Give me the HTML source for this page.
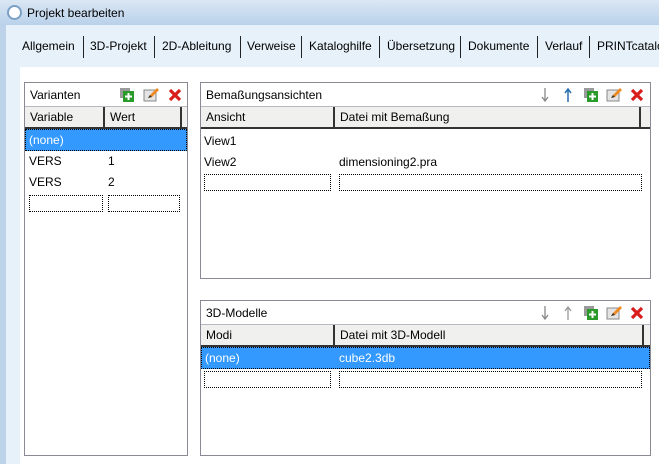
<!DOCTYPE html>
<html><head><style>
*{margin:0;padding:0;box-sizing:border-box}
body{width:659px;height:464px;overflow:hidden;background:#fff;font-family:"Liberation Sans",sans-serif;font-size:12px;color:#000;position:relative}
.abs{position:absolute}
.title{left:0;top:0;width:659px;height:25px;background:linear-gradient(#dbe7f4,#b9d1ea)}
.title span{position:absolute;left:27px;top:6px;font-size:12px}
.ico{left:7px;top:5px;width:15px;height:15px;border-radius:50%;border:2px solid #7aa0c6;background:#fff}
.lb1{left:0;top:25px;width:6px;height:439px;background:#bcd3ea}
.lb2{left:6px;top:25px;width:14px;height:439px;background:#e6f1f9}
.tabs{left:6px;top:25px;width:653px;height:42px;background:#e6f1f9}
.tab{position:absolute;top:39px;font-size:12px}
.sep{position:absolute;top:36px;width:1px;height:22px;background:#222}
.panel{position:absolute;border:1px solid #8a8a96;background:#fff}
.ph{position:absolute;left:0;right:0;top:0;height:24px;border-bottom:1px solid #b8b8c0}
.ph span{position:absolute;left:5px;top:5px}
.ch{position:absolute;left:0;right:0;height:22px;background:#f0f0ee;border-bottom:2px solid #333}
.ch div{position:absolute;top:0;height:20px;border-right:2px solid #333;padding:3px 5px}
.sel{position:absolute;left:0;right:0;height:22px;background:#3399ff;color:#fff;border:1px dotted #000}
.cell{position:absolute;padding:0}
.dot{position:absolute;height:17px;border:1px dotted #000}
.icons{position:absolute;top:4px;height:16px}
</style></head><body>
<div class="abs title"><div class="abs ico"></div><span>Projekt bearbeiten</span></div>
<div class="abs lb2"></div><div class="abs lb1"></div>
<div class="abs tabs"></div>
<div class="tab" style="left:22px">Allgemein</div><div class="sep" style="left:83px"></div>
<div class="tab" style="left:90px">3D-Projekt</div><div class="sep" style="left:154px"></div>
<div class="tab" style="left:162px">2D-Ableitung</div><div class="sep" style="left:240px"></div>
<div class="tab" style="left:247px">Verweise</div><div class="sep" style="left:301px"></div>
<div class="tab" style="left:309px">Kataloghilfe</div><div class="sep" style="left:379px"></div>
<div class="tab" style="left:387px">Übersetzung</div><div class="sep" style="left:460px"></div>
<div class="tab" style="left:468px">Dokumente</div><div class="sep" style="left:537px"></div>
<div class="tab" style="left:545px">Verlauf</div><div class="sep" style="left:589px"></div>
<div class="tab" style="left:597px">PRINTcatalog</div>

<svg width="0" height="0" style="position:absolute"><defs>
<g id="add"><rect x="0" y="0" width="10" height="10" fill="#9a9a9a"/><rect x="3" y="3" width="11" height="11" fill="#2a9a2a"/><path d="M8.5 5v7M5 8.5h7" stroke="#fff" stroke-width="2"/></g>
<g id="edit"><rect x="0" y="3" width="12" height="11" fill="#e4e4e4" stroke="#888"/><path d="M4 11l2-3 7-7 2 2-7 7z" fill="#f08a20"/><path d="M4 11l2-3 2 2z" fill="#333"/></g>
<g id="del"><path d="M2 2l10 10M12 2L2 12" stroke="#d91c1c" stroke-width="3.2"/></g>
</defs></svg>

<!-- Left panel -->
<div class="panel" style="left:24px;top:82px;width:164px;height:374px">
 <div class="ph"><span>Varianten</span>
  <svg class="icons" style="left:95px" width="70" height="16"><use href="#add" x="0" y="1"/><use href="#edit" x="24" y="0"/><use href="#del" x="48" y="1"/></svg></div>
 <div class="ch" style="top:24px"><div style="left:0;width:80px">Variable</div><div style="left:80px;width:77px">Wert</div></div>
 <div class="sel" style="top:46px"><span class="cell" style="left:3px;top:3px">(none)</span></div>
 <div class="cell" style="left:4px;top:71px">VERS</div><div class="cell" style="left:83px;top:71px">1</div>
 <div class="cell" style="left:4px;top:92px">VERS</div><div class="cell" style="left:83px;top:92px">2</div>
 <div class="dot" style="left:4px;top:112px;width:74px"></div><div class="dot" style="left:83px;top:112px;width:72px"></div>
</div>

<!-- Right top -->
<div class="panel" style="left:200px;top:82px;width:451px;height:197px">
 <div class="ph"><span>Bemaßungsansichten</span>
  <svg class="icons" style="left:336px" width="110" height="16"><path d="M8 1v12M5 10l3 4 3-4" stroke="#888" stroke-width="1.3" fill="none"/><path d="M31 15V3M28 6l3-4 3 4" stroke="#2a6fb0" stroke-width="1.5" fill="none"/><use href="#add" x="47" y="1"/><use href="#edit" x="70" y="0"/><use href="#del" x="93" y="1"/></svg></div>
 <div class="ch" style="top:24px"><div style="left:0;width:134px">Ansicht</div><div style="left:134px;width:306px">Datei mit Bemaßung</div></div>
 <div class="cell" style="left:3px;top:51px">View1</div>
 <div class="cell" style="left:3px;top:72px">View2</div><div class="cell" style="left:138px;top:72px">dimensioning2.pra</div>
 <div class="dot" style="left:3px;top:91px;width:127px"></div><div class="dot" style="left:138px;top:91px;width:303px"></div>
</div>

<!-- Right bottom -->
<div class="panel" style="left:200px;top:300px;width:451px;height:156px">
 <div class="ph"><span>3D-Modelle</span>
  <svg class="icons" style="left:336px" width="110" height="16"><path d="M8 1v12M5 10l3 4 3-4" stroke="#888" stroke-width="1.3" fill="none"/><path d="M31 15V3M28 6l3-4 3 4" stroke="#999" stroke-width="1.3" fill="none"/><use href="#add" x="47" y="1"/><use href="#edit" x="70" y="0"/><use href="#del" x="93" y="1"/></svg></div>
 <div class="ch" style="top:24px"><div style="left:0;width:134px">Modi</div><div style="left:134px;width:309px">Datei mit 3D-Modell</div></div>
 <div class="sel" style="top:46px"><span class="cell" style="left:3px;top:3px">(none)</span><span class="cell" style="left:137px;top:3px">cube2.3db</span></div>
 <div class="dot" style="left:3px;top:70px;width:127px"></div><div class="dot" style="left:138px;top:70px;width:303px"></div>
</div>
</body></html>
